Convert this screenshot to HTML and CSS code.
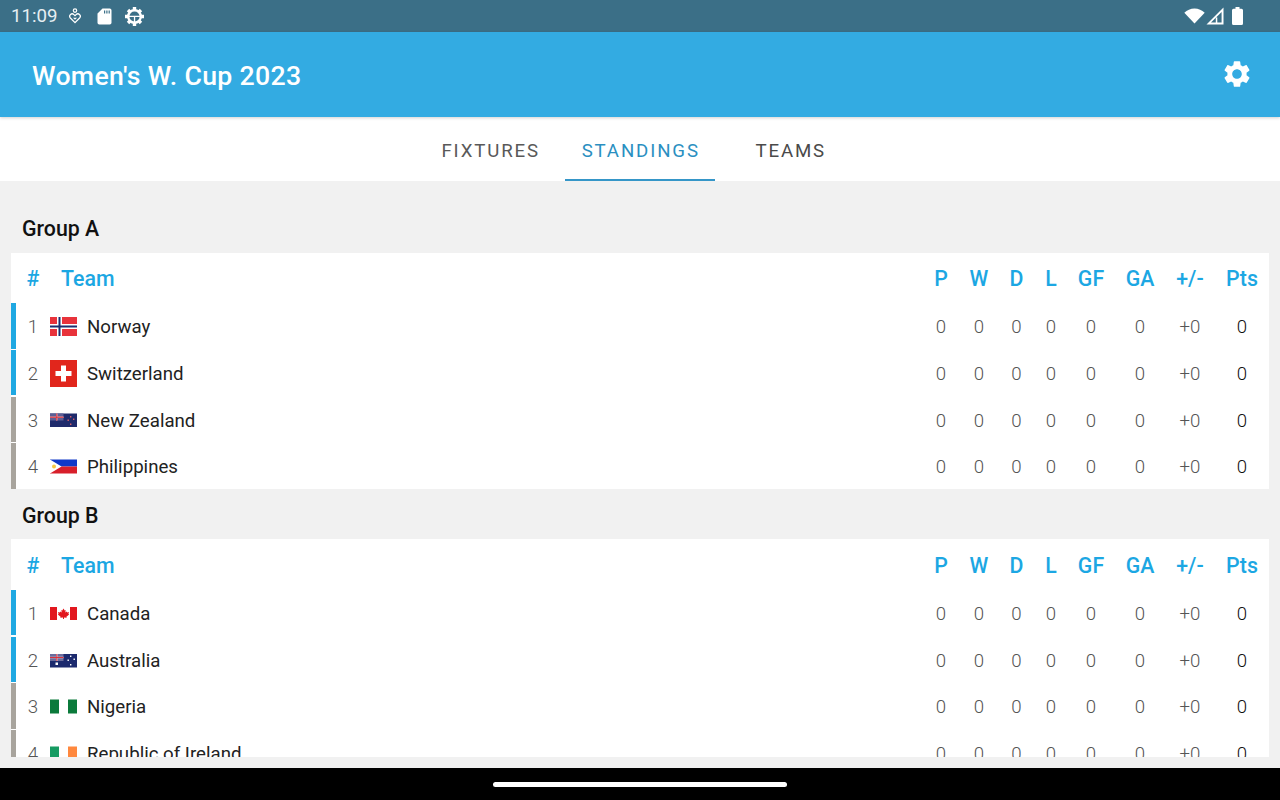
FILE: index.html
```html
<!DOCTYPE html>
<html lang="en">
<head>
<meta charset="utf-8">
<title>Women's W. Cup 2023</title>
<link rel="stylesheet" href="styles.css">
</head>
<body>
<div class="screen">
  <div class="statusbar">
    <span class="clock">11:09</span>
    <svg class="st-drop" width="12" height="16" viewBox="0 0 12 16"><circle cx="6" cy="2.6" r="1.7" fill="none" stroke="#fff" stroke-width="1.2"/><path d="M6 14.6 1.4 10a2.5 2.5 0 0 1 0-3.4 2.5 2.5 0 0 1 3.5 0L6 7.7l1.1-1.1a2.5 2.5 0 0 1 3.5 0 2.5 2.5 0 0 1 0 3.4z" fill="none" stroke="#fff" stroke-width="1.3"/><path d="M6 11.8 3.9 9.7h4.2z" fill="#fff"/></svg>
    <svg class="st-sd" width="15" height="17" viewBox="0 0 15 17"><path d="M5.5.5h7.2a1.8 1.8 0 0 1 1.8 1.8v12.4a1.8 1.8 0 0 1-1.8 1.8H2.3a1.8 1.8 0 0 1-1.8-1.8V5.5z" fill="#fff"/><path d="M7 2.5h1.2v3H7zM9.3 2.5h1.2v3H9.3zM11.6 2.5h1.2v3h-1.2z" fill="#3b6f87"/></svg>
    <svg class="st-gear" width="19" height="19" viewBox="0 0 19 19"><circle cx="9.5" cy="9.5" r="6.3" fill="none" stroke="#fff" stroke-width="2.4"/><path d="M7.800 0h3.400v3.500H7.800zM7.800 15.500h3.400V19H7.800zM0 7.800h3.500v3.400H0zM15.500 7.800H19v3.400h-3.500zM1.800 4.200 4.200 1.800 6.500 4.100 4.100 6.500zM14.800 1.800 17.200 4.200 14.900 6.500 12.500 4.100zM4.200 17.200 1.800 14.800 4.100 12.500 6.500 14.900zM17.200 14.800 14.800 17.200 12.500 14.900 14.900 12.500z" fill="#fff"/><path d="M4 8.800h11v1.300H4zM8.900 8.800h1.300V15H8.900z" fill="#fff"/></svg>
    <span class="grow"></span>
    <svg class="st-wifi" width="21" height="16" viewBox="0 0 21 16"><path d="M10.500 15.500 .3 4.800C3 2.200 6.500.6 10.500.6s7.500 1.600 10.200 4.200z" fill="#fff"/></svg>
    <svg class="st-signal" width="18" height="18" viewBox="0 0 18 18"><path d="M17.500.5V17.500H.5zM15.600 5 5 15.600h4.800V10.500h1.500v5.100h4.300z" fill="#fff" fill-rule="evenodd"/></svg>
    <svg class="st-batt" width="11" height="18" viewBox="0 0 11 18"><path d="M3.500 0h4v1.800h2a1.500 1.500 0 0 1 1.500 1.500v13.200a1.500 1.500 0 0 1-1.500 1.500h-8A1.500 1.500 0 0 1 0 16.500V3.300a1.500 1.500 0 0 1 1.500-1.500h2z" fill="#fff"/></svg>
  </div>

  <header class="appbar">
    <h1 class="title">Women's W. Cup 2023</h1>
    <svg class="settings" width="32" height="32" viewBox="0 0 24 24"><path fill="#fff" d="M19.140,12.940c0.040-0.300,0.060-0.610,0.060-0.940c0-0.320-0.020-0.640-0.070-0.940l2.030-1.580c0.180-0.140,0.230-0.410,0.120-0.610l-1.920-3.320c-0.120-0.220-0.370-0.290-0.590-0.220l-2.390,0.960c-0.500-0.380-1.030-0.700-1.620-0.940L14.400,2.810c-0.040-0.240-0.240-0.410-0.480-0.410h-3.840c-0.240,0-0.430,0.170-0.470,0.410L9.250,5.350C8.660,5.590,8.120,5.920,7.630,6.290L5.240,5.330c-0.220-0.080-0.470,0-0.590,0.220L2.740,8.870C2.620,9.080,2.660,9.340,2.860,9.480l2.030,1.580C4.840,11.360,4.800,11.690,4.800,12s0.020,0.640,0.070,0.940l-2.030,1.580c-0.180,0.140-0.230,0.410-0.120,0.610l1.920,3.320c0.120,0.220,0.370,0.290,0.590,0.220l2.390-0.960c0.500,0.380,1.030,0.700,1.620,0.940l0.360,2.540c0.050,0.240,0.240,0.410,0.480,0.410h3.840c0.240,0,0.440-0.170,0.470-0.410l0.360-2.540c0.590-0.240,1.130-0.560,1.620-0.940l2.390,0.960c0.220,0.080,0.470,0,0.590-0.220l1.920-3.320c0.120-0.220,0.070-0.470-0.120-0.610L19.140,12.940z M12,15.600c-1.980,0-3.600-1.620-3.600-3.600s1.620-3.600,3.600-3.600s3.600,1.620,3.600,3.600S13.980,15.600,12,15.600z"/></svg>
  </header>

  <nav class="tabs">
    <a class="tab tab-fixtures">FIXTURES</a>
    <a class="tab tab-active">STANDINGS</a>
    <a class="tab tab-teams">TEAMS</a>
  </nav>

  <main class="content">
    <section class="group">
      <h2 class="group-title">Group A</h2>
      <div class="card">
        <div class="row head">
          <span class="rank">#</span><span class="team">Team</span>
          <span>P</span><span>W</span><span>D</span><span>L</span><span>GF</span><span>GA</span><span>+/-</span><span>Pts</span>
        </div>
        <div class="row q">
          <span class="rank">1</span>
          <span class="team"><svg class="flag" viewBox="0 0 27 27"><rect y="4" width="27" height="19" fill="#e8333b"/><path d="M7 4h5v19H7zM0 11h27v5H0z" fill="#fff"/><path d="M8.500 4h2v19h-2zM0 12.500h27v2H0z" fill="#1b2f6e"/></svg>Norway</span>
          <span>0</span><span>0</span><span>0</span><span>0</span><span>0</span><span>0</span><span>+0</span><span class="pts">0</span>
        </div>
        <div class="row q">
          <span class="rank">2</span>
          <span class="team"><svg class="flag" viewBox="0 0 27 27"><rect width="27" height="27" fill="#e1261c"/><path d="M11 5.500h5V11h5.500v5H16v5.500h-5V16H5.500v-5H11z" fill="#fff"/></svg>Switzerland</span>
          <span>0</span><span>0</span><span>0</span><span>0</span><span>0</span><span>0</span><span>+0</span><span class="pts">0</span>
        </div>
        <div class="row">
          <span class="rank">3</span>
          <span class="team"><svg class="flag" viewBox="0 0 27 27"><rect y="6.500" width="27" height="13.500" fill="#1f2a6b"/><rect y="6.500" width="13.500" height="7" fill="#5b5f95"/><path d="M0 9.500h13.500v1.500H0zM6 6.500h1.500v7H6z" fill="#f2b8bb"/><path d="M0 9.800h13.500v.9H0zM6.300 6.500h.9v7h-.9z" fill="#d8303c"/><path d="M20 9h1.400v1.400H20zM23 11.500h1.400v1.400H23zM17.500 12.500h1.400v1.400h-1.400zM20 16.500h1.400v1.400H20z" fill="#d9606a"/></svg>New Zealand</span>
          <span>0</span><span>0</span><span>0</span><span>0</span><span>0</span><span>0</span><span>+0</span><span class="pts">0</span>
        </div>
        <div class="row">
          <span class="rank">4</span>
          <span class="team"><svg class="flag" viewBox="0 0 27 27"><rect y="6.500" width="27" height="7" fill="#1038c8"/><rect y="13.500" width="27" height="7" fill="#d81f2a"/><path d="M0 6.500 11.500 13.500 0 20.500z" fill="#fff"/><circle cx="4" cy="13.500" r="2" fill="#f6c945"/></svg>Philippines</span>
          <span>0</span><span>0</span><span>0</span><span>0</span><span>0</span><span>0</span><span>+0</span><span class="pts">0</span>
        </div>
      </div>
    </section>

    <section class="group">
      <h2 class="group-title">Group B</h2>
      <div class="card">
        <div class="row head">
          <span class="rank">#</span><span class="team">Team</span>
          <span>P</span><span>W</span><span>D</span><span>L</span><span>GF</span><span>GA</span><span>+/-</span><span>Pts</span>
        </div>
        <div class="row q">
          <span class="rank">1</span>
          <span class="team"><svg class="flag" viewBox="0 0 27 27"><rect x="0" y="7" width="7" height="13" fill="#e2181f"/><rect x="20" y="7" width="7" height="13" fill="#e2181f"/><path d="M13.500 8.500l1.200 2 1-.5-.4 2.600 1.500-1.200.4 1 1.800-.3-.6 1.900.8.500-2.800 2.200.3 1.100-2.700-.4V19h-1v-1.600l-2.700.4.300-1.100-2.800-2.200.8-.5-.6-1.900 1.800.3.400-1 1.500 1.200-.4-2.600 1 .5z" fill="#e2181f"/></svg>Canada</span>
          <span>0</span><span>0</span><span>0</span><span>0</span><span>0</span><span>0</span><span>+0</span><span class="pts">0</span>
        </div>
        <div class="row q">
          <span class="rank">2</span>
          <span class="team"><svg class="flag" viewBox="0 0 27 27"><rect y="7" width="27" height="13.500" fill="#1c2a6e"/><rect y="7" width="13.500" height="7" fill="#6a6d9d"/><path d="M0 9.800h13.500v1.500H0zM6 7h1.500v7H6z" fill="#f4d4d6"/><path d="M0 10.100h13.500v.9H0zM6.300 7h.9v7h-.9z" fill="#d8303c"/><path d="M5.500 15.500h2.500V18H5.500zM20 8.500h1.400v1.400H20zM23.500 11.500h1.400v1.400h-1.400zM17.500 12.500h1.400v1.400h-1.400zM20 17h1.400v1.400H20z" fill="#fff"/></svg>Australia</span>
          <span>0</span><span>0</span><span>0</span><span>0</span><span>0</span><span>0</span><span>+0</span><span class="pts">0</span>
        </div>
        <div class="row">
          <span class="rank">3</span>
          <span class="team"><svg class="flag" viewBox="0 0 27 27"><rect y="6.500" width="9" height="14" fill="#0b7a3b"/><rect x="18" y="6.500" width="9" height="14" fill="#0b7a3b"/></svg>Nigeria</span>
          <span>0</span><span>0</span><span>0</span><span>0</span><span>0</span><span>0</span><span>+0</span><span class="pts">0</span>
        </div>
        <div class="row">
          <span class="rank">4</span>
          <span class="team"><svg class="flag" viewBox="0 0 27 27"><rect y="6.500" width="9" height="14" fill="#169b62"/><rect x="18" y="6.500" width="9" height="14" fill="#ff883e"/></svg>Republic of Ireland</span>
          <span>0</span><span>0</span><span>0</span><span>0</span><span>0</span><span>0</span><span>+0</span><span class="pts">0</span>
        </div>
      </div>
    </section>
  </main>

  <footer class="navbar"><span class="pill"></span></footer>
</div>
</body>
</html>
```
FILE: styles.css
```css
* { box-sizing: border-box; }
html, body { margin: 0; padding: 0; }
body { font-family: Roboto, "Liberation Sans", sans-serif; background: #f1f1f1; }

.screen { width: 1280px; height: 800px; display: flex; flex-direction: column; overflow: hidden; }

.statusbar { height: 32px; flex: none; background: #3b6f87; display: flex; align-items: center; padding: 0 37px 0 11px; color: #e6eef2; }
.clock { font-size: 18.67px; width: 58px; }
.st-drop { margin-right: 16px; }
.st-sd { margin-right: 13px; }
.grow { flex: 1; }
.st-wifi { margin-right: 1px; }
.st-signal { margin-right: 8px; }

.appbar { height: 85px; flex: none; background: #33abe2; display: flex; align-items: center; justify-content: space-between; padding: 2px 27px 0 32px; box-shadow: 0 1px 3px rgba(0,0,0,.18); position: relative; }
.title { margin: 0; font-size: 26.67px; font-weight: 500; letter-spacing: 0.33px; color: #fff; }
.settings { margin-top: -3px; }

.tabs { height: 64px; flex: none; background: #fff; display: flex; justify-content: center; }
.tab { width: 150px; display: flex; align-items: center; justify-content: center; font-size: 18.67px; letter-spacing: 1.87px; padding: 5.5px 0 0 1.5px; border-bottom: 2.500px solid transparent; }
.tab-fixtures { color: #595959; }
.tab-active { color: #2a8fc1; border-bottom-color: #3596c8; }
.tab-teams { color: #4a4a4a; }

.content { height: 576px; flex: none; margin-bottom: 11px; overflow: hidden; padding: 22.33px 11px 0; }
.group { display: flex; flex-direction: column; }
.group-title { margin: 0; height: 49.33px; display: flex; align-items: center; padding: 1px 0 0 11px; font-size: 21.33px; font-weight: 500; color: #111; }
.card { background: #fff; overflow: hidden; margin-bottom: 1.33px; }

.row { display: grid; grid-template-columns: 16px 1fr 38px 38px 37px 32px 48px 50px 50px 54px; height: 46.67px; padding-top: 1.33px; align-items: center; font-size: 18.67px; font-weight: 300; color: #555; text-align: center; position: relative; }
.row:last-child { margin-bottom: -1.33px; }
.row::before { content: ""; position: absolute; left: 0; top: 0; bottom: 1.33px; width: 5px; background: #a8a49d; }
.row.q::before { background: #1fa8e2; }
.row.head { height: 50.67px; padding-top: 1px; font-size: 21.33px; font-weight: 500; color: #1ca7e3; }
.row.head::before { display: none; }
.rank { grid-column: 1; width: 44px; text-align: center; }
.row .team { grid-column: 2; margin-left: 23px; display: flex; align-items: center; text-align: left; font-weight: 400; color: #222; }
.row.head .team { margin-left: 34px; font-weight: 500; color: #1ca7e3; }
.pts { color: #111; font-weight: 300; }
.flag { width: 27px; height: 27px; margin-right: 10px; flex: none; margin-top: -1px; }

.navbar { height: 32px; flex: none; background: #000; display: flex; align-items: center; justify-content: center; }
.pill { width: 294px; height: 5px; border-radius: 3px; background: #fff; }
```
